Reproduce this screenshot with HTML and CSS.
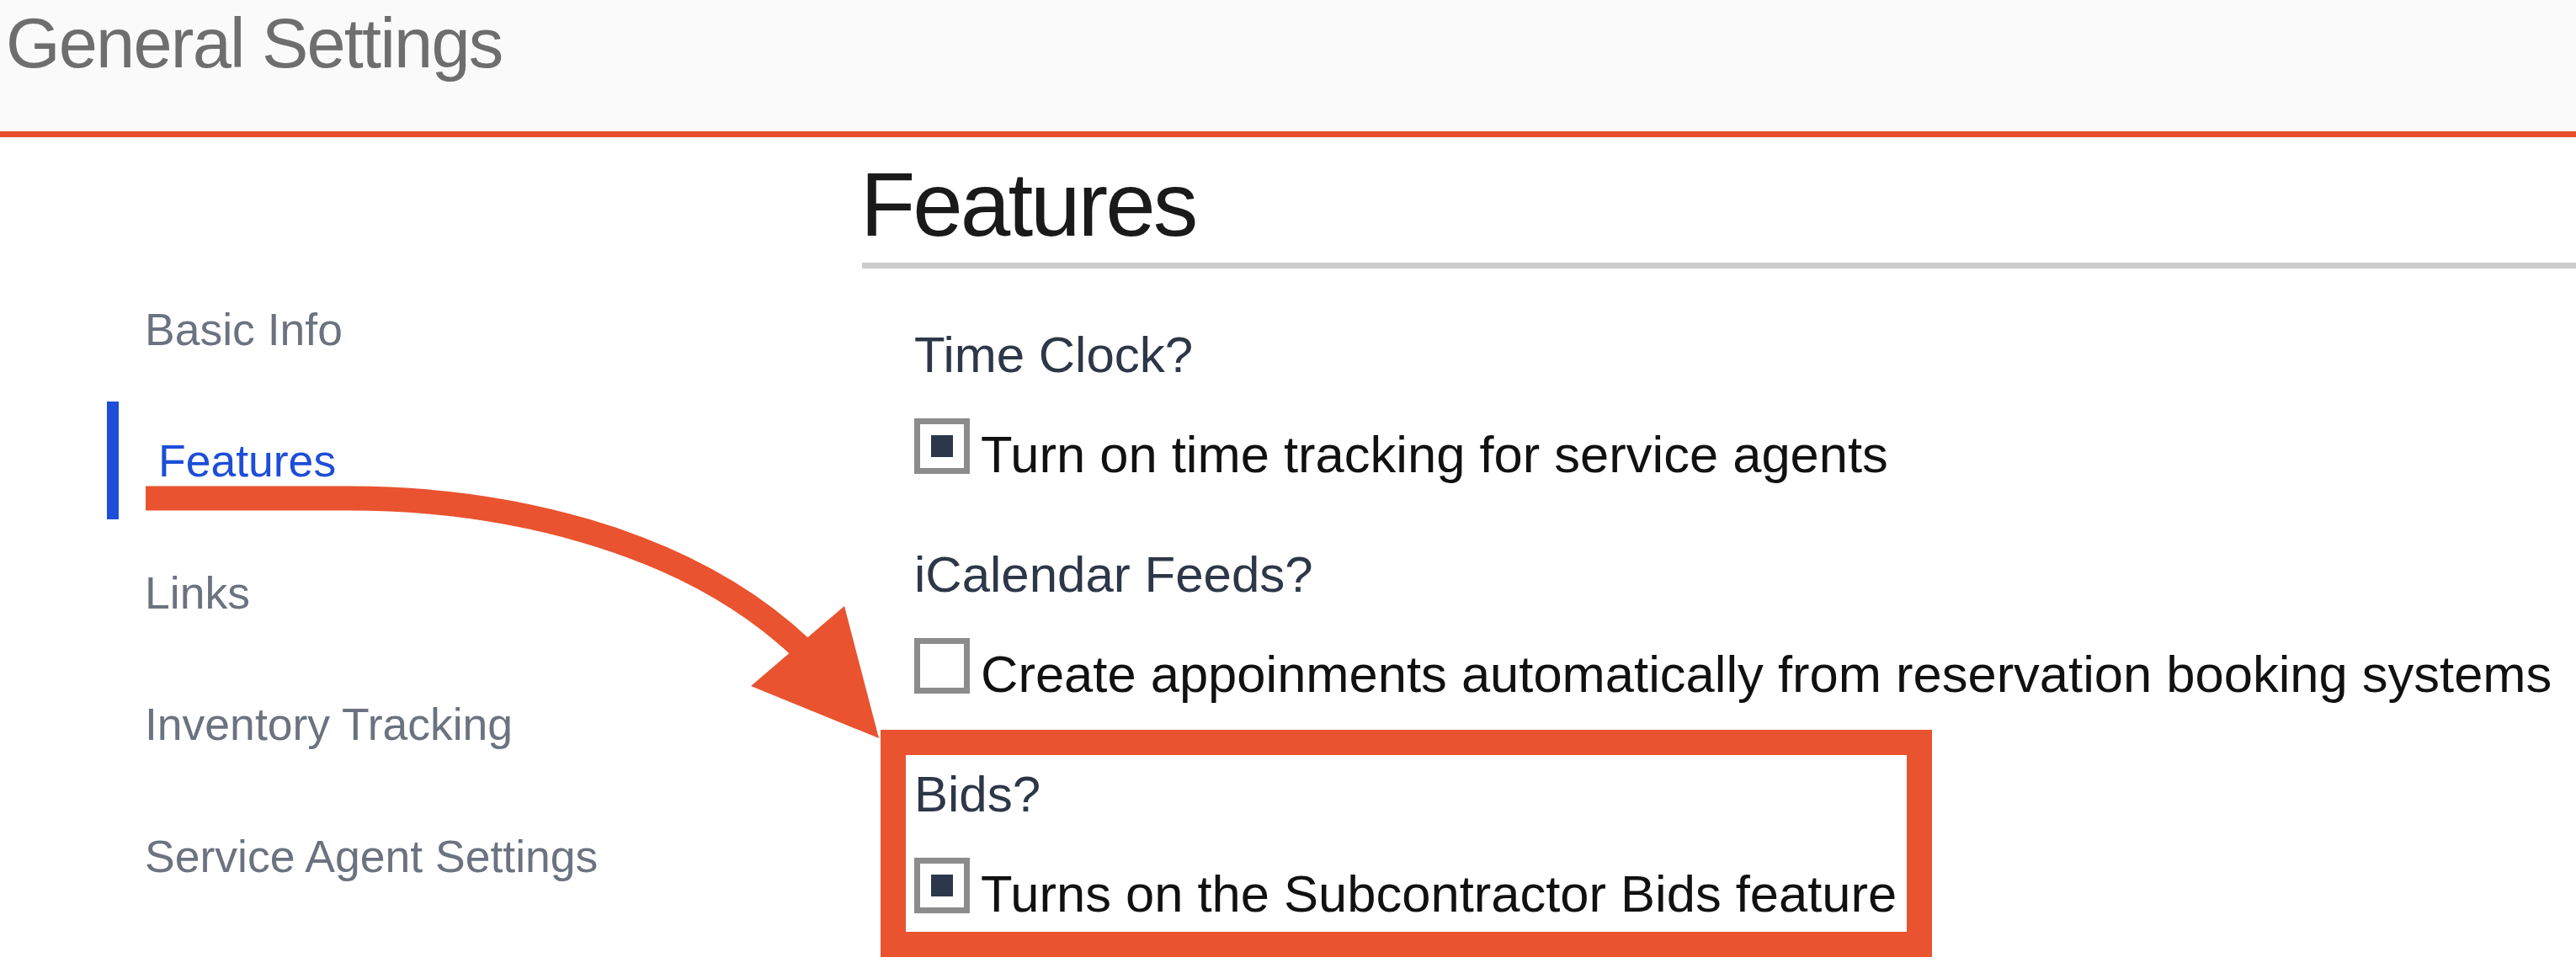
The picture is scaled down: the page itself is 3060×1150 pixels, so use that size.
FILE: index.html
```html
<!DOCTYPE html>
<html lang="en">
<head>
<meta charset="utf-8">
<title>General Settings</title>
<link rel="stylesheet" href="styles.css">
</head>
<body>
<header class="page-header">
  <h1 class="page-title">General Settings</h1>
</header>
<div class="layout">
  <nav class="sidebar">
    <a class="nav-item" href="#">Basic Info</a>
    <a class="nav-item active" href="#">Features</a>
    <a class="nav-item" href="#">Links</a>
    <a class="nav-item" href="#">Inventory Tracking</a>
    <a class="nav-item" href="#">Service Agent Settings</a>
  </nav>
  <main class="main">
    <h2 class="section-title">Features</h2>
    <div class="groups">
      <div class="group">
        <div class="group-label">Time Clock?</div>
        <label class="option"><span class="checkbox checked"></span><span class="option-text">Turn on time tracking for service agents</span></label>
      </div>
      <div class="group">
        <div class="group-label">iCalendar Feeds?</div>
        <label class="option"><span class="checkbox"></span><span class="option-text">Create appoinments automatically from reservation booking systems</span></label>
      </div>
      <div class="group highlight">
        <div class="group-label">Bids?</div>
        <label class="option"><span class="checkbox checked"></span><span class="option-text">Turns on the Subcontractor Bids feature</span></label>
      </div>
    </div>
  </main>
</div>
<svg class="annotation-arrow" width="3060" height="1150" viewBox="0 0 3060 1150" aria-hidden="true">
  <path d="M173 592 L414 592 C590 592 810 636 952 770" fill="none" stroke="#e9532f" stroke-width="29"/>
  <polygon points="1003,720 892,815 1044,877" fill="#e9532f"/>
</svg>
</body>
</html>
```

FILE: styles.css
```css
html, body {
  margin: 0;
  padding: 0;
}

body {
  position: relative;
  width: 3060px;
  height: 1150px;
  overflow: hidden;
  background: #ffffff;
  font-family: "Liberation Sans", Arial, sans-serif;
}

.page-header {
  box-sizing: border-box;
  height: 163px;
  padding: 2px 0 0 7px;
  background: #fafafa;
  border-bottom: 7px solid #e5502a;
}

.page-title {
  margin: 0;
  font-size: 83px;
  line-height: 100px;
  font-weight: normal;
  letter-spacing: -1.8px;
  color: #6e6e6e;
}

.layout {
  display: flex;
}

.sidebar {
  box-sizing: border-box;
  flex: none;
  width: 1024px;
  padding: 157.6px 0 0 127px;
  display: flex;
  flex-direction: column;
  gap: 16.5px;
}

.nav-item {
  display: block;
  font-size: 53.5px;
  line-height: 64px;
  color: #6b7280;
  text-decoration: none;
  border-left: 14px solid transparent;
  padding: 39px 0 37px 31px;
  white-space: nowrap;
}

.nav-item.active {
  color: #1d4ed8;
  border-left-color: #1d4ed8;
  padding-left: 47px;
}

.main {
  flex: 1;
  min-width: 0;
}

.section-title {
  margin: 20px 0 0;
  padding-bottom: 9px;
  border-bottom: 7px solid #cdcdcd;
  font-size: 107px;
  line-height: 120px;
  font-weight: normal;
  letter-spacing: -3px;
  text-indent: -2px;
  color: #1a1a1a;
}

.groups {
  padding: 63px 0 0 62px;
}

.group + .group {
  margin-top: 80px;
}

.group-label {
  font-size: 60px;
  line-height: 80px;
  color: #2d3748;
  margin-bottom: 35px;
  white-space: nowrap;
}

.group.highlight {
  width: fit-content;
  margin-top: 43px;
  margin-left: -40px;
  border: 30px solid #e9532f;
  padding: 7px 12px 22px 10px;
}

.option {
  display: flex;
  align-items: flex-end;
  gap: 13px;
}

.checkbox {
  box-sizing: border-box;
  flex: none;
  width: 66px;
  height: 66px;
  border: 7px solid #8c8c8c;
  background: #ffffff;
  display: flex;
  align-items: center;
  justify-content: center;
}

.checkbox.checked::after {
  content: "";
  width: 26px;
  height: 26px;
  background: #2b384b;
}

.option-text {
  font-size: 61.5px;
  line-height: 47px;
  color: #111111;
  white-space: nowrap;
}

.annotation-arrow {
  position: absolute;
  top: 0;
  left: 0;
  pointer-events: none;
}
```
